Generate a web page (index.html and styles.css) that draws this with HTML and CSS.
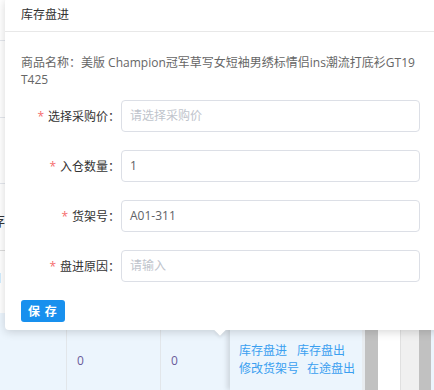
FILE: index.html
```html
<html>
<head>
<meta http-equiv="Content-Type" content="text/html; charset=UTF-8">
<link rel="stylesheet" href="styles.css">
</head>
<body>
<div class="page">
  <div class="table">
    <div class="row r1"><span></span></div>
    <div class="row r2"><span></span></div>
    <div class="row r3"><span></span></div>
    <div class="row r4"><span class="cut">存</span></div>
    <div class="row r5"><span class="cut num">1</span></div>
    <div class="row hover">
      <div class="cell c1"></div>
      <div class="cell c2">0</div>
      <div class="cell c3">0</div>
      <div class="cell ops">
        <div><a>库存盘进</a><a>库存盘出</a></div>
        <div><a>修改货架号</a><a>在途盘出</a></div>
      </div>
      <div class="bar gray"></div>
      <div class="bar white"></div>
      <div class="bar light"></div>
      <div class="bar gray2"></div>
    </div>
  </div>

  <div class="popover">
    <div class="pop-title">库存盘进</div>
    <div class="pop-body">
      <p class="goods">商品名称：美版 Champion冠军草写女短袖男绣标情侣ins潮流打底衫GT19<br>T425</p>
      <div class="form-item">
        <label class="form-label"><i>*</i>选择采购价：</label>
        <div class="input placeholder">请选择采购价</div>
      </div>
      <div class="form-item">
        <label class="form-label"><i>*</i>入仓数量：</label>
        <div class="input">1</div>
      </div>
      <div class="form-item">
        <label class="form-label"><i>*</i>货架号：</label>
        <div class="input">A01-311</div>
      </div>
      <div class="form-item">
        <label class="form-label"><i>*</i>盘进原因：</label>
        <div class="input placeholder">请输入</div>
      </div>
      <button class="btn-save">保 存</button>
    </div>
    <div class="arrow"></div>
  </div>
</div>
</body>
</html>
```

FILE: styles.css
```css
body {
    margin: 0;
    font-family: "Open Sans", "Noto Sans CJK SC", sans-serif;
    font-size: 12px;
    background: #fff;
}

.page {
    position: relative;
    width: 434px;
    height: 390px;
    overflow: hidden;
}

/* table behind the popover */
.table {
    display: flex;
    flex-direction: column;
}
.row {
    display: flex;
    align-items: center;
    border-bottom: 1px solid #e4e7ed;
    box-sizing: border-box;
}
.r1 { height: 41px; }
.r2 { height: 77px; }
.r3 { height: 66px; }
.r4 { height: 67px; border-bottom-color: #dcdcdc; padding-top: 8px; }
.r5 { height: 62px; border-bottom: none; align-items: flex-start; padding-top: 18px; }
.cut {
    margin-left: -9px;
    font-size: 14px;
    line-height: 18px;
    color: #333;
}
.num {
    margin-left: -5px;
    color: #6a3cf5;
}

.hover {
    height: 77px;
    background: #ecf5fd;
    border-bottom: none;
    align-items: stretch;
}
.cell {
    box-sizing: border-box;
    border-right: 1px solid #e2e6ea;
    padding: 17px 10px 0 10px;
    color: #6a5a9a;
    font-size: 12px;
    display: flex;
    align-items: center;
}
.c1 { width: 67px; }
.c2 { width: 94px; }
.c3 { width: 69px; border-right: none; }
.ops {
    width: 135px;
    flex-direction: column;
    align-items: flex-start;
    justify-content: center;
    padding-left: 9px;
    padding-right: 0;
    line-height: 18px;
    white-space: nowrap;
    box-shadow: -3px 0 5px rgba(0, 0, 0, 0.12);
    border-right: 3px solid #e8ecf0;
}
.ops a {
    color: #3a9ff0;
    margin-right: 10px;
}
.ops div a:last-child { margin-right: 0; }
.ops div + div a { margin-right: 8px; }
.bar { height: 100%; }
.gray { width: 13px; background: #c1c1c1; }
.white { width: 22px; background: #fff; border-right: 1px solid #e0e0e0; }
.light { width: 18px; background: #f0f0f0; }
.gray2 { width: 12px; background: #c1c1c1; }

/* popover */
.popover {
    position: absolute;
    left: 5px;
    top: -2px;
    width: 440px;
    background: #fff;
    border-radius: 4px;
    box-shadow: 0 2px 10px rgba(0, 0, 0, 0.16);
}
.pop-title {
    height: 33px;
    line-height: 33px;
    padding: 0 16px;
    color: #333;
    border-bottom: 1px solid #e8e8e8;
}
.pop-body {
    padding: 22px 16px 8px 16px;
}
.goods {
    margin: 0 0 12px 0;
    color: #666;
    line-height: 17px;
}
.form-item {
    display: flex;
    align-items: center;
    margin-bottom: 18px;
}
.form-label {
    width: 100px;
    box-sizing: border-box;
    padding-right: 1px;
    text-align: right;
    color: #333;
}
.form-label i {
    font-style: normal;
    color: #f56c6c;
    margin-right: 4px;
}
.input {
    width: 299px;
    height: 32px;
    box-sizing: border-box;
    border: 1px solid #dcdfe6;
    border-radius: 4px;
    padding: 0 8px;
    line-height: 30px;
    color: #606266;
}
.placeholder { color: #c0c4cc; }
.btn-save {
    display: block;
    height: 22px;
    padding: 0 7px;
    border: none;
    border-radius: 3px;
    background: #1890ee;
    color: #fff;
    font-family: "Noto Sans CJK SC", sans-serif;
    font-size: 12px;
    font-weight: bold;
    letter-spacing: 1px;
    line-height: 22px;
}
.arrow {
    position: absolute;
    left: 211px;
    bottom: -4px;
    width: 8px;
    height: 8px;
    background: #fff;
    transform: rotate(45deg);
    box-shadow: 2px 2px 3px rgba(0, 0, 0, 0.06);
}
```
